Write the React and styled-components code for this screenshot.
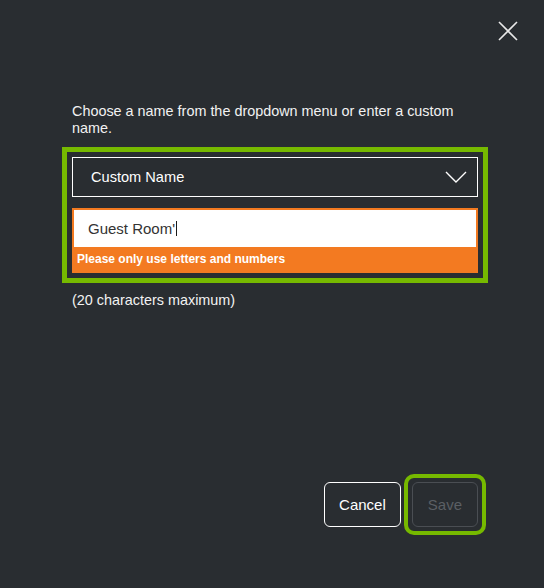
import React from "react";
import styled, { createGlobalStyle } from "styled-components";

const GlobalStyle = createGlobalStyle`
  * { box-sizing: border-box; }
  body {
    margin: 0;
    background: #292d31;
    font-family: "Liberation Sans", Arial, sans-serif;
  }
`;

function App() {
  return (
    <>
      <GlobalStyle />
      <Dialog>
        <Header>
          <CloseButton aria-label="Close">
            <svg width="20" height="20" viewBox="0 0 20 20">
              <path d="M1 1 L19 19 M19 1 L1 19" stroke="#e8e8e8" strokeWidth="1.6" fill="none" />
            </svg>
          </CloseButton>
        </Header>
        <Main>
          <Prompt>Choose a name from the dropdown menu or enter a custom name.</Prompt>
          <FocusFrame>
            <Select>
              <span>Custom Name</span>
              <svg width="22" height="12" viewBox="0 0 22 12">
                <polyline points="1,1 11,11 21,1" stroke="#ffffff" strokeWidth="1.4" fill="none" />
              </svg>
            </Select>
            <ErrorGroup>
              <NameInput>
                Guest Room'<Caret />
              </NameInput>
              <ErrorText>Please only use letters and numbers</ErrorText>
            </ErrorGroup>
          </FocusFrame>
          <Hint>(20 characters maximum)</Hint>
        </Main>
        <Footer>
          <Button>Cancel</Button>
          <FocusRing>
            <Button disabled>Save</Button>
          </FocusRing>
        </Footer>
      </Dialog>
    </>
  );
}

const Dialog = styled.div`
  width: 544px;
  height: 588px;
  display: flex;
  flex-direction: column;
  background: #292d31;
`;

const Header = styled.div`
  display: flex;
  justify-content: flex-end;
  padding: 21px 26px 0 0;
`;

const CloseButton = styled.div`
  width: 20px;
  height: 20px;
  display: flex;
`;

const Main = styled.div`
  padding: 0 56px 0 62px;
  margin-top: 62px;
`;

const Prompt = styled.div`
  width: 416px;
  padding-left: 10px;
  font-size: 14.4px;
  line-height: 17px;
  color: #f2f2f2;
`;

const FocusFrame = styled.div`
  margin-top: 10px;
  width: 426px;
  border: 5px solid #76b900;
  padding: 5px;
  display: flex;
  flex-direction: column;
  gap: 11px;
`;

const Select = styled.div`
  height: 40px;
  border: 1px solid #ffffff;
  display: flex;
  align-items: center;
  justify-content: space-between;
  padding: 0 10px 0 18px;
  color: #ffffff;
  font-size: 14.6px;
`;

const ErrorGroup = styled.div`
  background: #f37a21;
  padding: 2px;
  display: flex;
  flex-direction: column;
`;

const NameInput = styled.div`
  height: 37px;
  background: #ffffff;
  display: flex;
  align-items: center;
  padding-left: 14px;
  color: #333333;
  font-size: 15px;
`;

const Caret = styled.span`
  width: 1px;
  height: 15px;
  margin-left: 1px;
  background: #1a1a1a;
`;

const ErrorText = styled.div`
  height: 24px;
  line-height: 24px;
  padding-left: 3px;
  color: #ffffff;
  font-size: 12px;
  font-weight: bold;
`;

const Hint = styled.div`
  margin-top: 9px;
  padding-left: 10px;
  font-size: 14.4px;
  line-height: 17px;
  color: #f2f2f2;
`;

const Footer = styled.div`
  margin-top: auto;
  display: flex;
  justify-content: flex-end;
  align-items: center;
  gap: 3px;
  padding: 0 58px 53px 0;
`;

const FocusRing = styled.div`
  border: 4px solid #76b900;
  border-radius: 10px;
  padding: 4px;
  display: flex;
`;

const Button = styled.button`
  height: 45px;
  padding: 0 ${(p) => (p.disabled ? "15px" : "14px")};
  border-radius: 6px;
  background: transparent;
  border: 1px solid ${(p) => (p.disabled ? "#4a4e53" : "#ffffff")};
  color: ${(p) => (p.disabled ? "#5b5f64" : "#ffffff")};
  font-family: "Liberation Sans", Arial, sans-serif;
  font-size: 15px;
`;

export default App;
